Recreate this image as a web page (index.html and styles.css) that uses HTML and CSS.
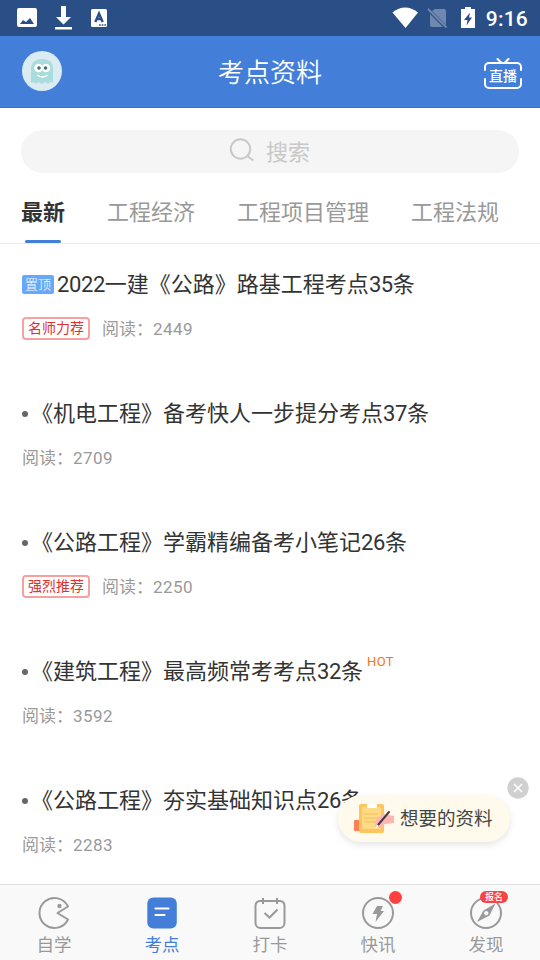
FILE: index.html
```html
<!DOCTYPE html>
<html lang="zh-CN">
<head>
<meta charset="utf-8">
<title>考点资料</title>
<link rel="stylesheet" href="styles.css">
</head>
<body>
<div class="app">
  <div class="status">
    <svg class="status-left" width="92" height="24" viewBox="0 0 92 24">
      <path fill="#fff" fill-rule="evenodd" d="M3 2h16a2 2 0 0 1 2 2v15a2 2 0 0 1-2 2H3a2 2 0 0 1-2-2V4a2 2 0 0 1 2-2zM4 18h14l-4-6-4 4-3-2z"/>
      <path fill="#fff" d="M45 0h5v11h5l-7.500 7.500L40 11h5zM39 21h17v2.500H39z"/>
      <rect x="75" y="3" width="16" height="18" rx="1.500" fill="#fff"/>
      <path fill="none" stroke="#2a4f86" stroke-width="2.400" d="M79.300 16 83 7.500 86.700 16M80.500 13h5"/>
      <path stroke="#2a4f86" stroke-width="1.500" stroke-dasharray="1.700 1" d="M83 19h7"/>
    </svg>
    <span class="spacer"></span>
    <svg class="status-right" width="84" height="24" viewBox="0 0 84 24">
      <path fill="#fff" d="M0.500 6.500Q13-3.500 26 6.500L13.500 22z"/>
      <path fill="#6e88b0" d="M43 3h9a2 2 0 0 1 2 2v14L40 5zM38 8l13 13H40a2 2 0 0 1-2-2z"/>
      <path stroke="#6e88b0" stroke-width="2" d="m36 3 18.500 18.500"/>
      <path fill="#fff" d="M73 1h6v2h4v19H69V3h4z"/>
      <path fill="#2a4f86" d="M78 6.500 72 14h3.500l-1 5.500 5.500-8h-3z"/>
    </svg>
    <span class="clock">9:16</span>
  </div>

  <header class="header">
    <svg class="avatar" width="40" height="40" viewBox="0 0 40 40">
      <circle cx="20" cy="20" r="20" fill="#daebf1"/>
      <path fill="#a9dcdc" d="M9 32V18Q9 8 20 8t11 10v14l-2.500-1.500L26 33l-3-2-3 2-3-2-3 2-2.500-2z"/>
      <circle cx="16.500" cy="17" r="4.300" fill="#fff"/><circle cx="24" cy="17" r="4.300" fill="#fff"/>
      <circle cx="17" cy="17" r="1.800" fill="#4d6d74"/><circle cx="23.500" cy="17" r="1.800" fill="#4d6d74"/>
      <path fill="none" stroke="#fff" stroke-width="1.500" stroke-linecap="round" d="M16 24.500q4.500 3 9 0"/>
    </svg>
    <h1 class="title">考点资料</h1>
    <div class="live">
      <svg width="38" height="32" viewBox="0 0 38 32" fill="none" stroke="#fff" stroke-width="2" stroke-linecap="round">
        <path d="M1 12V9a4 4 0 0 1 4-4h28a4 4 0 0 1 4 4v3M37 21v5a4 4 0 0 1-4 4H5a4 4 0 0 1-4-4v-5M13.500 1l4 4M24.500 1l-4 4"/>
      </svg>
      <span class="live-text">直播</span>
    </div>
  </header>

  <div class="search">
    <svg width="26" height="26" viewBox="0 0 26 26" fill="none" stroke="#c8c8c8" stroke-width="2" stroke-linecap="round"><circle cx="11.500" cy="12" r="9.700"/><path d="m18.500 19 5 4"/></svg>
    <span>搜索</span>
  </div>

  <nav class="tabs">
    <span class="tab tab-active">最新</span><span class="tab">工程经济</span><span class="tab">工程项目管理</span><span class="tab">工程法规</span>
  </nav>

  <main class="list">
    <article class="item">
      <h2 class="item-title"><span class="pin">置顶</span><span class="num">2022</span>一建《公路》路基工程考点<span class="num">35</span>条</h2>
      <div class="meta"><span class="tag">名师力荐</span><span>阅读：<span class="count">2449</span></span></div>
    </article>
    <article class="item">
      <h2 class="item-title"><i class="dot"></i>《机电工程》备考快人一步提分考点<span class="num">37</span>条</h2>
      <div class="meta"><span>阅读：<span class="count">2709</span></span></div>
    </article>
    <article class="item">
      <h2 class="item-title"><i class="dot"></i>《公路工程》学霸精编备考小笔记<span class="num">26</span>条</h2>
      <div class="meta"><span class="tag">强烈推荐</span><span>阅读：<span class="count">2250</span></span></div>
    </article>
    <article class="item">
      <h2 class="item-title"><i class="dot"></i>《建筑工程》最高频常考考点<span class="num">32</span>条<span class="hot">HOT</span></h2>
      <div class="meta"><span>阅读：<span class="count">3592</span></span></div>
    </article>
    <article class="item">
      <h2 class="item-title"><i class="dot"></i>《公路工程》夯实基础知识点<span class="num">26</span>条</h2>
      <div class="meta"><span>阅读：<span class="count">2283</span></span></div>
    </article>
  </main>

  <footer class="bottom">
    <div class="nav">
      <svg width="36" height="36" viewBox="0 0 36 36" fill="none" stroke="#999" stroke-width="2" stroke-linejoin="round"><path d="M32 11.500A15 15 0 1 0 32 24.500L21.500 18z"/><circle cx="23.500" cy="11" r="2.200" fill="#999" stroke="none"/></svg>
      <span>自学</span>
    </div>
    <div class="nav nav-active">
      <svg width="36" height="36" viewBox="0 0 36 36"><rect x="3.300" y="2.500" width="29.500" height="31" rx="6" fill="#437fd9"/><path stroke="#fff" stroke-width="2.200" stroke-linecap="round" d="M11.500 13.500h13M11.500 20h9"/></svg>
      <span>考点</span>
    </div>
    <div class="nav">
      <svg width="36" height="36" viewBox="0 0 36 36" fill="none" stroke="#999" stroke-width="2"><path d="M13 6h10M8.500 6h-.5a4.500 4.500 0 0 0-4.500 4.500V28a5 5 0 0 0 5 5h19a5 5 0 0 0 5-5V10.500A4.500 4.500 0 0 0 28 6h-3M8 6h3M11 3v6M25 3v6M11 6h14M12.500 18l5 4.500 8-8"/></svg>
      <span>打卡</span>
    </div>
    <div class="nav">
      <svg width="36" height="36" viewBox="0 0 36 36"><circle cx="18" cy="18" r="15" fill="none" stroke="#999" stroke-width="2"/><path fill="#999" d="M17 11h6l-2.500 5H24l-8.500 11 1.500-8h-4.500z"/></svg>
      <i class="red-dot"></i>
      <span>快讯</span>
    </div>
    <div class="nav">
      <svg width="36" height="36" viewBox="0 0 36 36"><circle cx="18" cy="18" r="15" fill="none" stroke="#999" stroke-width="2"/><path fill="#999" fill-rule="evenodd" d="M27.500 8.500 21.500 20.500 9 27l6.500-11.500zM18.200 16a2.200 2.200 0 1 0 .1 0z"/></svg>
      <b class="badge">报名</b>
      <span>发现</span>
    </div>
  </footer>

  <div class="floating">
    <svg width="42" height="32" viewBox="0 0 42 32">
      <rect x="0" y="17" width="12" height="11" rx="1" fill="#ff7e55"/>
      <rect x="5" y="1" width="25" height="29" rx="2" fill="#ffc45c"/>
      <rect x="8" y="4" width="19" height="22" fill="#ffda85"/>
      <rect x="13" y="1" width="10" height="4" rx="1" fill="#fff"/>
      <path stroke="#f8bb60" d="M10 11h14M10 15h14M10 19h12"/>
      <path fill="#ffb5b0" d="m22 16 7-5 11 2v7l-9 1-5 4-5-1z"/>
      <path stroke="#493943" stroke-width="2" stroke-linecap="round" d="M35 9 24 22"/><path stroke="#fff" stroke-width="1.500" d="m24 22-2 3"/>
    </svg>
    <span class="floating-text">想要的资料</span>
  </div>
  <svg class="close" width="22" height="22" viewBox="0 0 22 22"><circle cx="11" cy="11" r="10.700" fill="#d0d0d0"/><path stroke="#fff" stroke-width="1.500" d="m7 7 8 8M15 7l-8 8"/></svg>
</div>
</body>
</html>
```
FILE: styles.css
```css
* { box-sizing: border-box; }
body { margin: 0; background: #fff; font-family: Roboto, "Noto Sans CJK SC", sans-serif; }
svg { display: block; flex: none; }
.app { position: relative; width: 540px; height: 960px; overflow: hidden; display: flex; flex-direction: column; }

.status { flex: none; height: 36px; background: #2a4f86; display: flex; align-items: center; padding: 0 12px 0 16px; }
.spacer { flex: 1; }
.status-right { margin: 0 10px 0 0; }
.clock { color: #fff; font-size: 21px; font-weight: 500; line-height: 36px; letter-spacing: 0.2px; padding-top: 2px; }

.header { flex: none; height: 72px; background: #437fd9; border-bottom: 1px solid #3b73c8; display: flex; align-items: center; justify-content: space-between; padding: 0 18px 0 22px; }
.avatar { margin-top: -1px; }
.title { margin: 2px 6px 0 0; font-size: 26px; line-height: 36px; font-weight: 350; color: #fff; }
.live { position: relative; width: 38px; height: 32px; margin-top: 4px; }
.live-text { position: absolute; left: 0; right: 0; top: 9px; text-align: center; font-size: 14px; line-height: 18px; color: #fff; font-weight: 500; }

.search { flex: none; height: 43px; margin: 22px 21px 0; border-radius: 22px; background: #f5f5f5; color: #c8c8c8; font-size: 22px; line-height: 43px; display: flex; justify-content: center; align-items: center; gap: 11px; }
.search svg { margin-top: -3px; }
.search span { padding-top: 2px; margin-right: 1px; }

.tabs { flex: none; height: 71px; border-bottom: 1px solid #ebebeb; display: flex; gap: 42px; padding: 19px 0 0 21px; font-size: 22px; line-height: 42px; color: #999; white-space: nowrap; }
.tab-active { position: relative; color: #333; font-weight: 700; }
.tab-active::after { content: ""; position: absolute; left: 4px; top: 48px; width: 36px; height: 3px; border-radius: 2px; background: #437fd9; }

.list { flex: 1; min-height: 0; overflow: hidden; padding: 24px 22px 0; }
.item { height: 129px; }
.item-title { margin: 0; height: 34px; display: flex; align-items: center; font-size: 22px; line-height: 34px; font-weight: 400; color: #333; white-space: nowrap; }
.num { letter-spacing: -0.4px; }
.pin { width: 32px; height: 19px; margin: -2px 3px 0 0; border-radius: 2px; background: #66a9fa; color: #fff; font-size: 13px; font-weight: 300; line-height: 19px; text-align: center; }
.dot { width: 6px; height: 6px; margin: -1px 3px 0 0; border-radius: 50%; background: #666; }
.hot { margin: -20px 0 0 4px; color: #f97316; font-size: 13px; line-height: 14px; letter-spacing: 0.4px; }
.meta { height: 24px; margin-top: 15px; display: flex; align-items: center; gap: 12px; font-size: 17px; line-height: 24px; color: #999; }
.tag { width: 68px; height: 23px; margin-top: -2px; border: 2px solid #f6a09f; border-radius: 4px; color: #e02f2f; font-size: 14px; line-height: 19px; display: flex; justify-content: center; }
.count { letter-spacing: 0.45px; }

.bottom { flex: none; height: 76px; background: #f9f9f9; border-top: 1px solid #e2e2e2; display: flex; }
.nav { position: relative; flex: 1; display: flex; flex-direction: column; align-items: center; padding-top: 10px; color: #999; font-size: 17.5px; line-height: 28px; }
.nav-active { color: #437fd9; }
.red-dot { position: absolute; left: 65px; top: 6px; width: 13px; height: 13px; border-radius: 50%; background: #fd4141; }
.badge { position: absolute; left: 48px; top: 6px; width: 28px; height: 12px; border-radius: 6px; background: #f94343; color: #fff; font-size: 9px; font-weight: 500; line-height: 12px; text-align: center; }

.floating { position: absolute; left: 338px; top: 795px; width: 172px; height: 47px; border-radius: 24px; background: #fffaeb; box-shadow: 0 3px 7px rgba(0, 0, 0, 0.1); display: flex; align-items: center; gap: 4px; padding-left: 16px; color: #444; font-size: 18.5px; line-height: 47px; white-space: nowrap; }
.floating-text { padding-top: 2px; }
.close { position: absolute; left: 507px; top: 777px; }
```
